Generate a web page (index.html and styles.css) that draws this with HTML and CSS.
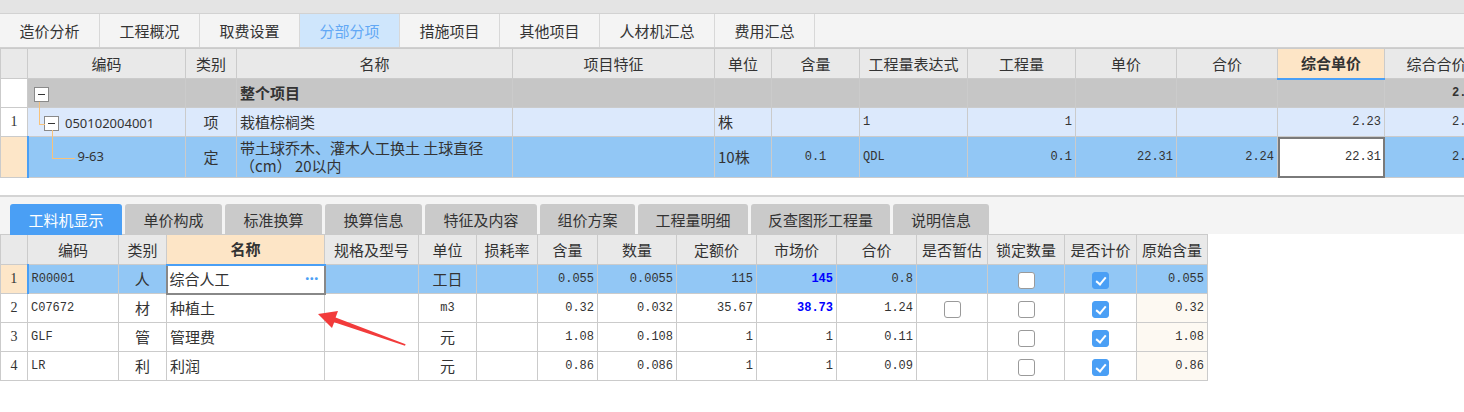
FILE: index.html
```html
<!DOCTYPE html>
<html lang="zh">
<head>
<meta charset="utf-8">
<title>分部分项</title>
<link rel="stylesheet" href="styles.css">
</head>
<body>
<div class="page">
  <div class="topstrip"></div>
  <div class="maintabs">
    <div class="maintab">造价分析</div>
    <div class="maintab">工程概况</div>
    <div class="maintab">取费设置</div>
    <div class="maintab active">分部分项</div>
    <div class="maintab">措施项目</div>
    <div class="maintab">其他项目</div>
    <div class="maintab wide">人材机汇总</div>
    <div class="maintab">费用汇总</div>
    <div class="maintab-rest"></div>
  </div>

  <div class="upper">
    <table class="grid top">
      <colgroup>
        <col class="c27"><col class="c158"><col class="c51"><col class="c276"><col class="c202"><col class="c57"><col class="c88"><col class="c108"><col class="c108"><col class="c101"><col class="c101"><col class="c107"><col class="c116">
      </colgroup>
      <tr class="hdr">
        <td></td><td>编码</td><td>类别</td><td>名称</td><td>项目特征</td><td>单位</td><td>含量</td><td>工程量表达式</td><td>工程量</td><td>单价</td><td>合价</td><td class="hl">综合单价</td><td>综合合价</td>
      </tr>
      <tr class="r0">
        <td class="rn white"></td>
        <td class="code"><span class="tbox b0"></span></td>
        <td></td>
        <td class="bold">整个项目</td>
        <td></td><td></td><td></td><td></td><td></td><td></td><td></td><td></td>
        <td class="num bold left">2.23</td>
      </tr>
      <tr class="r1">
        <td class="rn white">1</td>
        <td class="code"><span class="tbox b1"></span><span class="codetxt">050102004001</span></td>
        <td class="c">项</td>
        <td>栽植棕榈类</td>
        <td></td>
        <td>株</td>
        <td></td>
        <td class="mono">1</td>
        <td class="num">1</td>
        <td></td><td></td>
        <td class="num">2.23</td>
        <td class="num left">2.23</td>
      </tr>
      <tr class="r2">
        <td class="rn peach"></td>
        <td class="code sel"><div class="leafwrap"><span class="leaf">9-63</span></div></td>
        <td class="c">定</td>
        <td class="wrap"><div class="ln">带土球乔木、灌木人工换土 土球直径</div><div class="ln">（cm） 20以内</div></td>
        <td></td>
        <td>10株</td>
        <td class="num c">0.1</td>
        <td class="mono">QDL</td>
        <td class="num">0.1</td>
        <td class="num">22.31</td>
        <td class="num">2.24</td>
        <td class="num edit">22.31</td>
        <td class="num left">2.23</td>
      </tr>
    </table>
  </div>

  <div class="gap"></div>

  <div class="lowerpanel">
    <div class="subtabs">
      <div class="subtab active">工料机显示</div>
      <div class="subtab">单价构成</div>
      <div class="subtab">标准换算</div>
      <div class="subtab">换算信息</div>
      <div class="subtab">特征及内容</div>
      <div class="subtab">组价方案</div>
      <div class="subtab">工程量明细</div>
      <div class="subtab">反查图形工程量</div>
      <div class="subtab">说明信息</div>
    </div>
  </div>

  <table class="grid bottom">
    <colgroup>
      <col class="c27"><col class="c91"><col class="c48"><col class="c158"><col class="c94"><col class="c58"><col class="c61"><col class="c60"><col class="c79"><col class="c80"><col class="c80"><col class="c80"><col class="c71"><col class="c77"><col class="c72"><col class="c71">
    </colgroup>
    <tr class="hdr">
      <td></td><td>编码</td><td>类别</td><td class="hl">名称</td><td>规格及型号</td><td>单位</td><td>损耗率</td><td>含量</td><td>数量</td><td>定额价</td><td>市场价</td><td>合价</td><td>是否暂估</td><td>锁定数量</td><td>是否计价</td><td>原始含量</td>
    </tr>
    <tr class="br sel-row">
      <td class="rn peach">1</td>
      <td class="mono sel">R00001</td>
      <td class="c">人</td>
      <td class="namedit"><div class="nameinner"><span>综合人工</span><span class="dots">···</span></div></td>
      <td></td>
      <td class="c">工日</td>
      <td></td>
      <td class="num">0.055</td>
      <td class="num">0.0055</td>
      <td class="num">115</td>
      <td class="num blue">145</td>
      <td class="num">0.8</td>
      <td></td>
      <td class="c"><span class="cb"></span></td>
      <td class="c"><span class="cb on"></span></td>
      <td class="num">0.055</td>
    </tr>
    <tr class="br">
      <td class="rn">2</td>
      <td class="mono">C07672</td>
      <td class="c">材</td>
      <td>种植土</td>
      <td></td>
      <td class="c mono">m3</td>
      <td></td>
      <td class="num">0.32</td>
      <td class="num">0.032</td>
      <td class="num">35.67</td>
      <td class="num blue">38.73</td>
      <td class="num">1.24</td>
      <td class="c"><span class="cb"></span></td>
      <td class="c"><span class="cb"></span></td>
      <td class="c"><span class="cb on"></span></td>
      <td class="num cream">0.32</td>
    </tr>
    <tr class="br">
      <td class="rn">3</td>
      <td class="mono">GLF</td>
      <td class="c">管</td>
      <td>管理费</td>
      <td></td>
      <td class="c">元</td>
      <td></td>
      <td class="num">1.08</td>
      <td class="num">0.108</td>
      <td class="num">1</td>
      <td class="num">1</td>
      <td class="num">0.11</td>
      <td></td>
      <td class="c"><span class="cb"></span></td>
      <td class="c"><span class="cb on"></span></td>
      <td class="num cream">1.08</td>
    </tr>
    <tr class="br">
      <td class="rn">4</td>
      <td class="mono">LR</td>
      <td class="c">利</td>
      <td>利润</td>
      <td></td>
      <td class="c">元</td>
      <td></td>
      <td class="num">0.86</td>
      <td class="num">0.086</td>
      <td class="num">1</td>
      <td class="num">1</td>
      <td class="num">0.09</td>
      <td></td>
      <td class="c"><span class="cb"></span></td>
      <td class="c"><span class="cb on"></span></td>
      <td class="num cream">0.86</td>
    </tr>
  </table>

  <svg class="arrow" width="1464" height="412" viewBox="0 0 1464 412">
    <polygon points="318,314 338,311 335.6,317.6 405.6,344.2 405,345.8 334.2,322.2 332,328" fill="#f23b3b"/>
  </svg>
</div>
</body>
</html>
```
FILE: styles.css
```css
* { box-sizing: border-box; }
html, body { margin: 0; padding: 0; }
body {
  font-family: "Noto Sans CJK SC", "Microsoft YaHei", "Noto Sans", sans-serif;
  font-size: 15px;
  color: #333;
  background: #fff;
}
.page {
  position: relative;
  width: 1464px;
  height: 412px;
  overflow: hidden;
}
.topstrip {
  height: 14px;
  background: #e4e4e4;
  border-bottom: 1px solid #d2d2d2;
}
.maintabs {
  display: flex;
  height: 34px;
  background: #f4f4f4;
  border-bottom: 1px solid #d0d0d0;
}
.maintab {
  width: 100px;
  border-right: 1px solid #d8d8d8;
  display: flex;
  align-items: center;
  justify-content: center;
  line-height: 1;
}
.maintab.wide { width: 115px; }
.maintab.active { background: #cfe6fc; color: #62a8f5; }
.maintab-rest { flex: 1; }

.upper { width: 1464px; overflow: hidden; }

.grid {
  border-collapse: collapse;
  table-layout: fixed;
}
.grid.top { width: 1488px; }
.grid.bottom { width: 1207px; }
.grid td {
  border: 1px solid #cbcbcb;
  padding: 0 3px;
  white-space: nowrap;
  line-height: 1.2;
  vertical-align: middle;
}
.c27 { width: 27px; } .c158 { width: 158px; } .c51 { width: 51px; } .c276 { width: 276px; }
.c202 { width: 202px; } .c57 { width: 57px; } .c88 { width: 88px; } .c108 { width: 108px; }
.c101 { width: 101px; } .c107 { width: 107px; } .c116 { width: 104px; }
.c91 { width: 91px; } .c48 { width: 48px; } .c94 { width: 94px; } .c58 { width: 58px; }
.c61 { width: 61px; } .c60 { width: 60px; } .c79 { width: 79px; } .c80 { width: 80px; }
.c71 { width: 71px; } .c77 { width: 77px; } .c72 { width: 72px; }

.hdr td {
  background: #e9e9e9;
  text-align: center;
  height: 30px;
  color: #333;
}
.hdr td.hl {
  background: #fde5c6;
  font-weight: bold;
  border-bottom: 2px solid #4a9ff5;
}

.top .r0 td { background: #c6c6c6; height: 29px; }
.top .r1 td { background: #dce9fc; height: 29px; }
.top .r2 td { background: #92c7f5; height: 41px; }
.top td.white { background: #fff; }
.top td.peach, .bottom td.peach { background: #fde6c8; }
.rn { text-align: center; font-family: "Liberation Serif", serif; font-size: 14px; }
.bold { font-weight: bold; }
.c { text-align: center; }
.num {
  font-family: "Liberation Mono", monospace;
  font-size: 12px;
  text-align: right;
}
.num.c { text-align: center; }
.num.left { text-align: left; padding-left: 67px; }
.mono { font-family: "Liberation Mono", monospace; font-size: 12px; }
.wrap { white-space: normal; }
.ln { height: 18px; line-height: 18px; overflow: hidden; white-space: nowrap; }
.code { position: relative; padding: 0; }
.codetxt { font-family: "Noto Sans", sans-serif; font-size: 13px; margin-left: 6px; }
.sel { border-left: 2px solid #4a9ff5 !important; }

.tbox {
  position: relative;
  display: inline-block;
  width: 15px;
  height: 15px;
  border: 1px solid #8a8a8a;
  background: #fff;
  vertical-align: middle;
}
.tbox::after {
  content: "";
  position: absolute;
  left: 3px;
  top: 6px;
  width: 7px;
  height: 1px;
  background: #333;
}
.tbox.b0 { margin-left: 3px; }
.tbox.b1 { margin-left: 13px; }
.tbox.b1::before {
  content: "";
  position: absolute;
  left: -6px;
  top: -15px;
  width: 5px;
  height: 22px;
  border-left: 1px solid #f8c27a;
  border-bottom: 1px solid #f8c27a;
}
.leafwrap { position: relative; height: 39px; display: flex; align-items: center; }
.leafwrap::before {
  content: "";
  position: absolute;
  left: 20px;
  top: -8px;
  width: 22px;
  height: 28px;
  border-left: 1px solid #f8c27a;
  border-bottom: 1px solid #f8c27a;
}
.leaf { font-family: "Noto Sans", sans-serif; font-size: 13px; margin-left: 46px; }
.edit { background: #fff !important; outline: 2px solid #7a7a7a; outline-offset: -2px; }

.gap { height: 17px; }
.lowerpanel {
  border-top: 2px solid #d4d4d4;
  background: #f4f4f4;
  padding: 7px 0 0 10px;
  height: 39px;
}
.subtabs { display: flex; gap: 3px; height: 31px; }
.subtab {
  background: #cacaca;
  border-radius: 3px 3px 0 0;
  display: flex;
  align-items: center;
  justify-content: center;
  line-height: 1;
  color: #333;
}
.subtab.active { background: #4a9ff5; color: #fff; }
.subtab:nth-child(1) { width: 112px; }
.subtab:nth-child(2) { width: 97px; }
.subtab:nth-child(3) { width: 97px; }
.subtab:nth-child(4) { width: 97px; }
.subtab:nth-child(5) { width: 112px; }
.subtab:nth-child(6) { width: 95px; }
.subtab:nth-child(7) { width: 110px; }
.subtab:nth-child(8) { width: 139px; }
.subtab:nth-child(9) { width: 96px; }

.bottom .br td { height: 29px; background: #fff; }
.bottom .sel-row td { background: #92c7f5; }
.bottom .sel-row td.peach { background: #fde6c8; }
.bottom td.cream { background: #fdf9f2; }
.bottom td.namedit { background: #fff; padding: 0; border: 2px solid #888; }
.nameinner { display: flex; justify-content: space-between; align-items: center; padding: 0 5px 0 2px; }
.dots { color: #4a9ff5; font-family: "Noto Sans", sans-serif; font-size: 16px; font-weight: bold; letter-spacing: 0; }
.blue { color: #0000ff; font-weight: bold; }

.cb {
  display: inline-block;
  width: 17px;
  height: 17px;
  border: 1px solid #9a9a9a;
  border-radius: 3px;
  background: #fff;
  vertical-align: middle;
  position: relative;
}
.cb.on { background: #4a9ff5; border-color: #4a9ff5; }
.cb.on::after {
  content: "";
  position: absolute;
  left: 5px;
  top: 2px;
  width: 4px;
  height: 8px;
  border-right: 2px solid #fff;
  border-bottom: 2px solid #fff;
  transform: rotate(40deg);
}

.arrow { position: absolute; left: 0; top: 0; pointer-events: none; }
```
